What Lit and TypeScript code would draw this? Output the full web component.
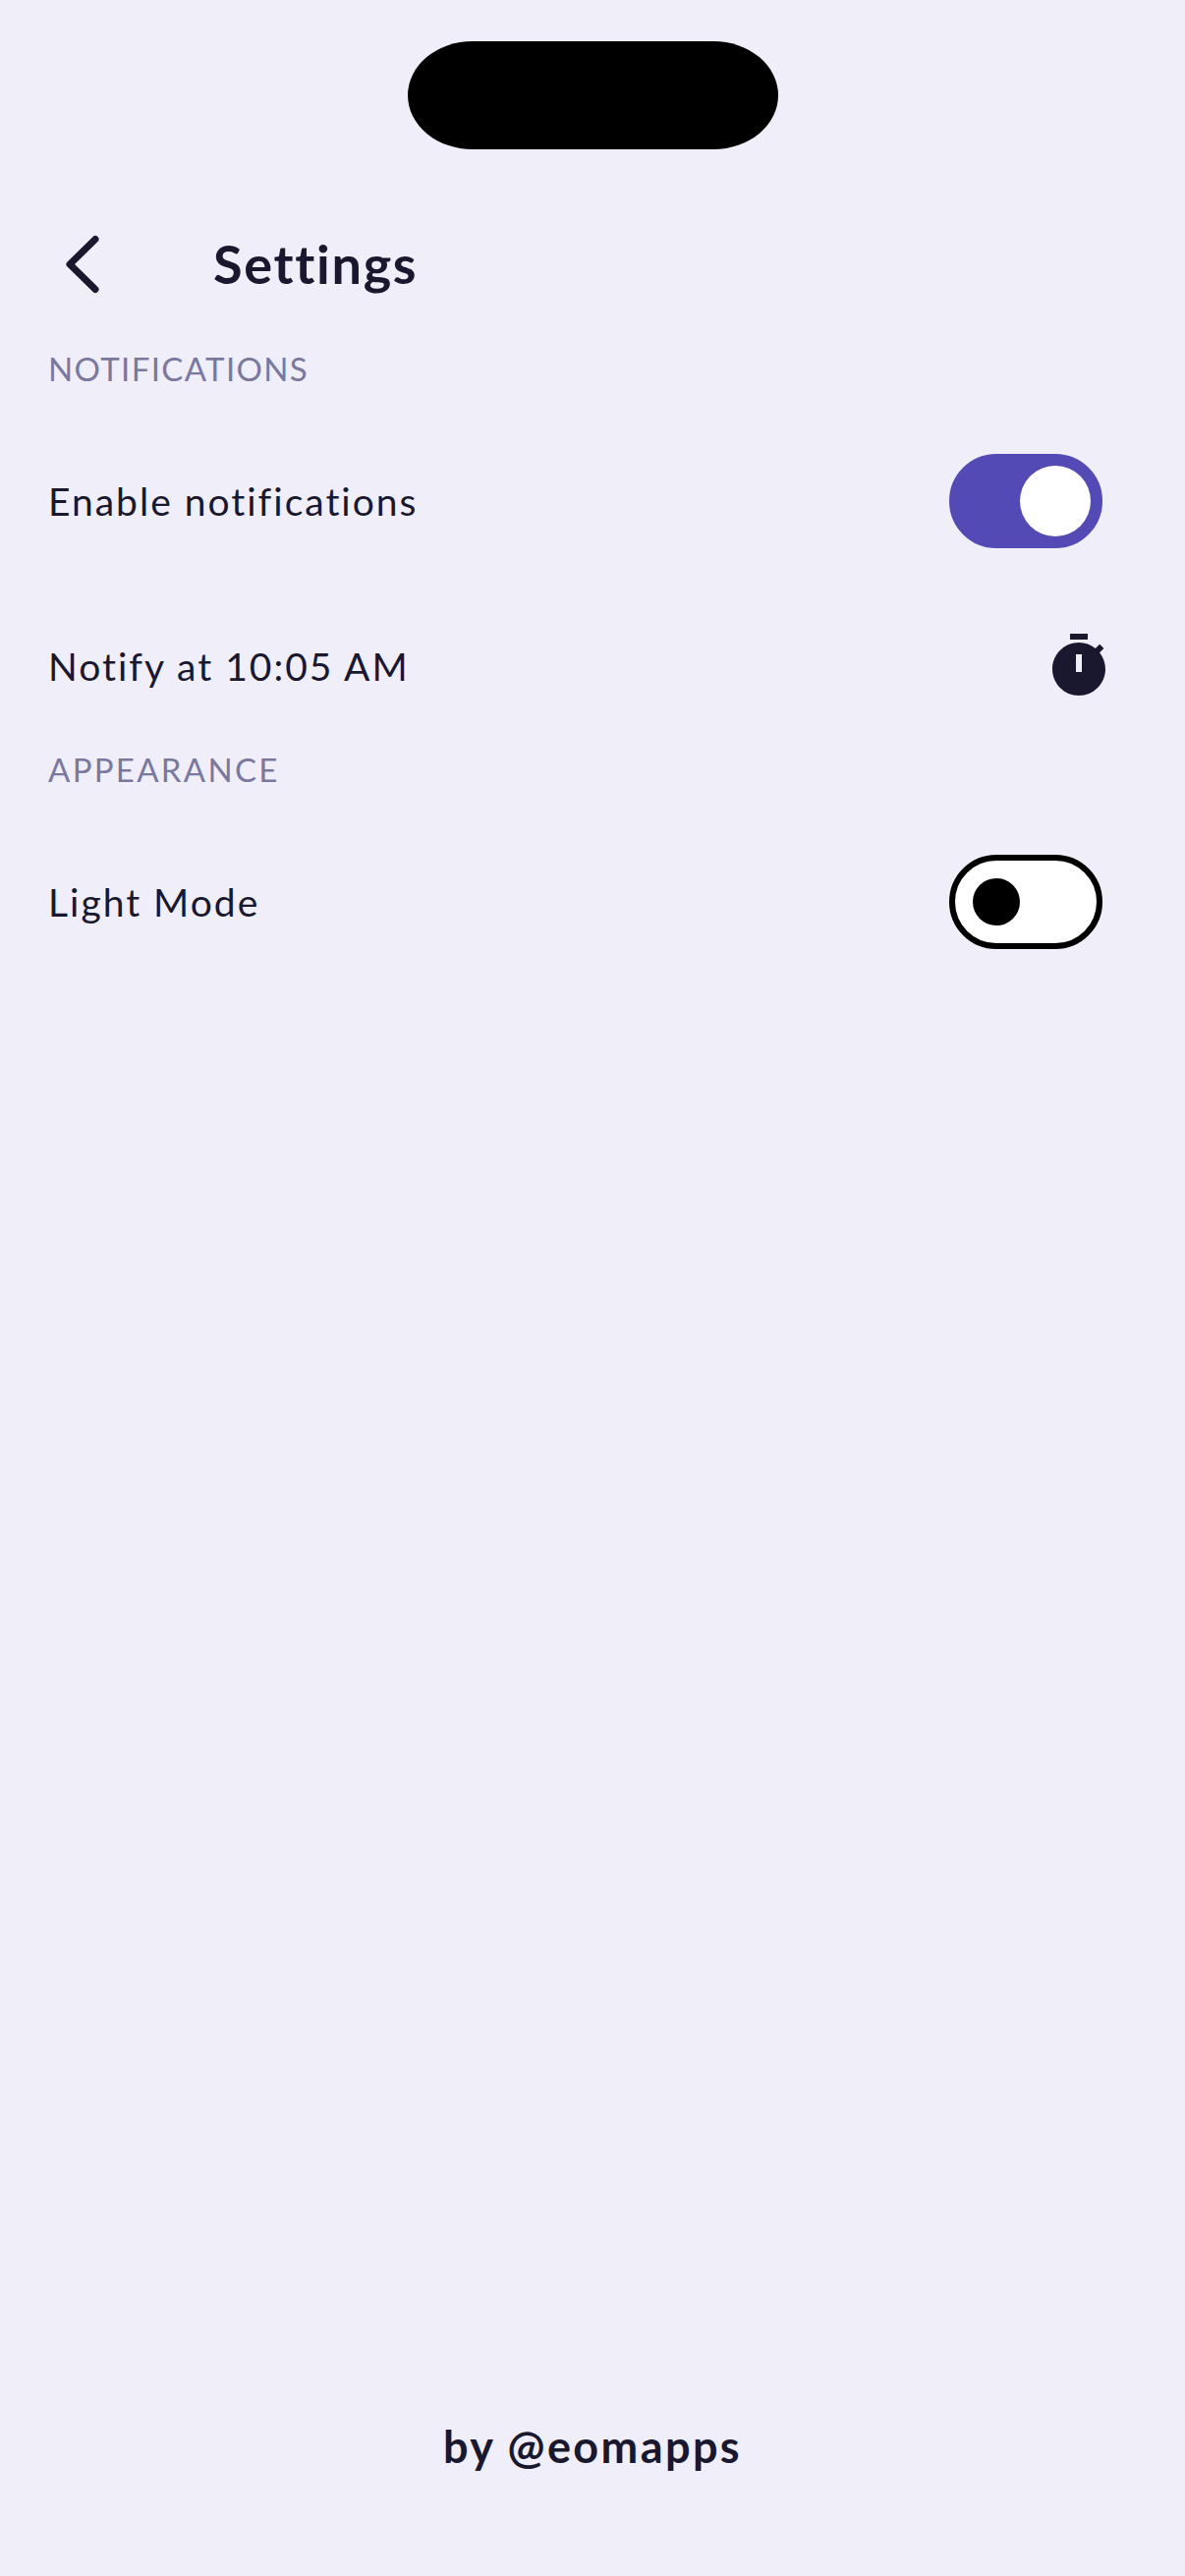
import { LitElement, html, css } from 'lit';
import { customElement, state } from 'lit/decorators.js';

@customElement('app-root')
export class AppRoot extends LitElement {
  static styles = css`
    :host {
      display: flex;
      flex-direction: column;
      min-height: 2622px;
      background: #f0eff9;
      color: #1a182e;
      font-family: 'Lato', 'Open Sans', sans-serif;
    }
    .island {
      align-self: center;
      width: 377px;
      height: 110px;
      margin-top: 42px;
      border-radius: 66px / 55px;
      background: #000;
      flex: none;
    }
    .header {
      display: flex;
      align-items: center;
      height: 108px;
      margin-top: 63px;
      margin-bottom: 25px;
      padding-left: 48px;
      gap: 97px;
    }
    .back {
      display: block;
      width: 72px;
      height: 72px;
      padding: 0;
      border: 0;
      background: none;
      color: inherit;
    }
    .back svg { display: block; }
    h1 {
      margin: 0;
      font-size: 54px;
      line-height: 72px;
      font-weight: 700;
      letter-spacing: 1.7px;
    }
    .label {
      margin: 0 0 24px;
      padding-left: 49px;
      font-size: 33px;
      line-height: 54px;
      font-weight: 400;
      letter-spacing: 1.35px;
      color: #7b789f;
    }
    .label.next {
      margin-top: 18px;
      letter-spacing: 2.3px;
    }
    .row {
      display: flex;
      align-items: center;
      justify-content: space-between;
      padding: 0 72px 0 49px;
      font-size: 39px;
      letter-spacing: 2px;
    }
    .row.tall { height: 168px; margin-bottom: 24px; }
    .row.short { height: 120px; }
    .toggle {
      position: relative;
      display: block;
      box-sizing: border-box;
      width: 156px;
      height: 96px;
      margin-right: 12px;
      padding: 0;
      border: 6px solid #000;
      border-radius: 48px;
      background: #fff;
      cursor: pointer;
    }
    .toggle::after {
      content: '';
      position: absolute;
      left: 18px;
      top: 18px;
      width: 48px;
      height: 48px;
      border-radius: 50%;
      background: #000;
    }
    .toggle.on {
      border-color: #534ab5;
      background: #534ab5;
    }
    .toggle.on::after {
      left: 66px;
      top: 6px;
      width: 72px;
      height: 72px;
      background: #fff;
    }
    .timer { display: block; width: 72px; height: 72px; fill: #1a182e; }
    .footer {
      margin-top: auto;
      padding-bottom: 102px;
      text-align: center;
      font-size: 45px;
      line-height: 60px;
      font-weight: 700;
      letter-spacing: 2.4px;
    }
  `;

  @state() notifications = true;
  @state() lightMode = false;

  render() {
    return html`
      <div class="island"></div>
      <header class="header">
        <button class="back" aria-label="Back">
          <svg width="72" height="72" viewBox="0 0 72 72" fill="none" stroke="currentColor" stroke-width="7" stroke-linecap="round" stroke-linejoin="round">
            <path d="M49 10.5 L23 36 L49 61.5" />
          </svg>
        </button>
        <h1>Settings</h1>
      </header>

      <h2 class="label">NOTIFICATIONS</h2>
      <div class="row tall">
        <span>Enable notifications</span>
        <button
          class="toggle ${this.notifications ? 'on' : ''}"
          role="switch"
          aria-label="Enable notifications"
          aria-checked=${this.notifications}
          @click=${() => (this.notifications = !this.notifications)}
        ></button>
      </div>
      <div class="row short">
        <span>Notify at 10:05 AM</span>
        <svg class="timer" viewBox="0 0 24 24">
          <path fill-rule="evenodd" d="M15 1H9v2h6V1zm-4 13h2V8h-2v6zm8.03-6.61l1.42-1.42c-.43-.51-.9-.99-1.41-1.41l-1.42 1.42C16.07 4.74 14.12 4 12 4c-4.97 0-9 4.03-9 9s4.02 9 9 9 9-4.03 9-9c0-2.12-.74-4.07-1.97-5.61z" />
        </svg>
      </div>

      <h2 class="label next">APPEARANCE</h2>
      <div class="row tall">
        <span>Light Mode</span>
        <button
          class="toggle ${this.lightMode ? 'on' : ''}"
          role="switch"
          aria-label="Light Mode"
          aria-checked=${this.lightMode}
          @click=${() => (this.lightMode = !this.lightMode)}
        ></button>
      </div>

      <div class="footer">by @eomapps</div>
    `;
  }
}
